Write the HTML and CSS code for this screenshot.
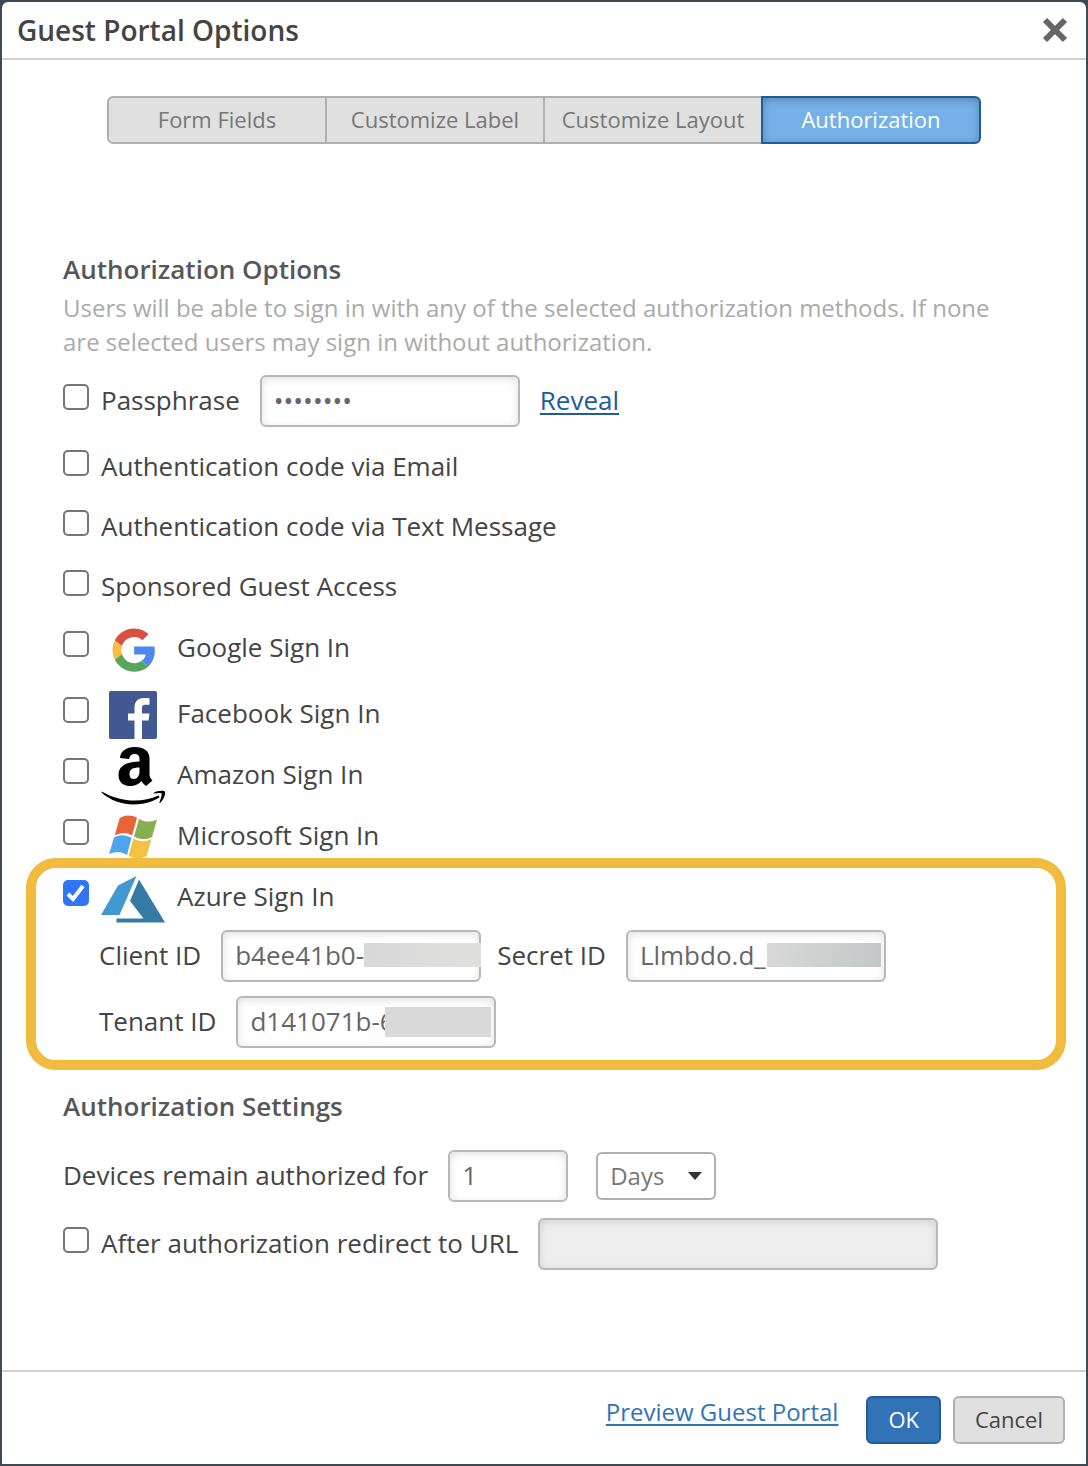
FILE: index.html
```html
<!DOCTYPE html>
<html lang="en">
<head>
    <meta charset="UTF-8">
    <title>Guest Portal Options</title>
    <link rel="stylesheet" href="styles.css">
</head>
<body>
    <div class="dialog">
        <header class="dialog-header">
            <h1>Guest Portal Options</h1>
            <button class="close" type="button" aria-label="Close">
                <svg width="26" height="26" viewBox="0 0 26 26"><path d="M3 3L23 23M23 3L3 23" stroke="#666" stroke-width="6"/></svg>
            </button>
        </header>

        <main class="dialog-body">
            <nav class="tabs">
                <button type="button">Form Fields</button>
                <button type="button">Customize Label</button>
                <button type="button">Customize Layout</button>
                <button type="button" class="active">Authorization</button>
            </nav>

            <section class="options">
                <h2>Authorization Options</h2>
                <p class="hint">Users will be able to sign in with any of the selected authorization methods. If none are selected users may sign in without authorization.</p>

                <div class="row passphrase">
                    <input type="checkbox" id="passphrase">
                    <label for="passphrase">Passphrase</label>
                    <input class="field" type="password" value="password" aria-label="Passphrase value">
                    <a href="#">Reveal</a>
                </div>
                <div class="row">
                    <input type="checkbox" id="email">
                    <label for="email">Authentication code via Email</label>
                </div>
                <div class="row">
                    <input type="checkbox" id="text">
                    <label for="text">Authentication code via Text Message</label>
                </div>
                <div class="row">
                    <input type="checkbox" id="sponsored">
                    <label for="sponsored">Sponsored Guest Access</label>
                </div>

                <div class="row social google">
                    <input type="checkbox" id="google">
                    <svg class="logo" viewBox="0 0 64 64">
                        <g transform="translate(11.5 12.500) scale(.9)">
                            <path fill="#d95040" d="M24 9.5c3.54 0 6.71 1.22 9.21 3.6l6.85-6.85C35.9 2.38 30.47 0 24 0 14.62 0 6.51 5.38 2.56 13.22l7.98 6.19C12.43 13.72 17.74 9.5 24 9.5z"/>
                            <path fill="#5186ec" d="M46.98 24.55c0-1.57-.15-3.09-.38-4.55H24v9.02h12.94c-.58 2.96-2.26 5.48-4.78 7.18l7.73 6c4.51-4.18 7.09-10.36 7.09-17.65z"/>
                            <path fill="#f2bd42" d="M10.53 28.59c-.48-1.45-.76-2.99-.76-4.59s.27-3.14.76-4.59l-7.98-6.19C.92 16.46 0 20.12 0 24s.92 7.54 2.56 10.78l7.97-6.19z"/>
                            <path fill="#58a55c" d="M24 48c6.48 0 11.93-2.13 15.89-5.81l-7.73-6c-2.15 1.45-4.92 2.3-8.16 2.3-6.26 0-11.57-4.22-13.47-9.91l-7.98 6.19C6.51 42.62 14.62 48 24 48z"/>
                        </g>
                    </svg>
                    <label for="google">Google Sign In</label>
                </div>
                <div class="row social">
                    <input type="checkbox" id="facebook">
                    <svg class="logo" viewBox="0 0 64 64">
                        <rect x="8" y="9" width="48" height="48" rx="2" fill="#415893"/>
                        <path fill="#fff" d="M33.5 57V38.500H27v-7h6.500v-6c0-6.500 4-9.500 9.500-9.500 2.600 0 5 .2 5.500.3v6.500h-3.800c-3 0-3.700 1.500-3.700 3.700v5h7.500l-1 7H41V57z"/>
                    </svg>
                    <label for="facebook">Facebook Sign In</label>
                </div>
                <div class="row social">
                    <input type="checkbox" id="amazon">
                    <svg class="logo" viewBox="0 0 64 64">
                        <path fill="#000" fill-rule="evenodd" d="M19 15C19.500 8 25 4 34 4s14.500 4 14.500 11.500V31c0 3 1 4.500 3 6.500L45 43c-2-1.500-3.500-3-4.500-5-3 3.500-6.500 5-11.500 5-7 0-11.500-4-11.500-11 0-9 7-13 21-13.500V16c0-3.500-1.500-5-5-5-3 0-4.500 1.500-5.500 5zM38.500 24.500c-7 0-10 2-10 6.500 0 3 1.500 5 4 5 4 0 6-3.500 6-8z"/>
                        <path fill="#000" d="M.5 48.500C19 59 40 60.500 57.500 52.500l1 2C42 64.500 17 64.500.500 49.500z"/>
                        <path fill="#000" d="M52.500 50c3-2.500 10-3 11.500-1.500 1 2-1.500 8.500-5 11.500l-.7-.6c1.500-3.400 3-8 2.200-9-1-.9-5-.5-8 .2z"/>
                    </svg>
                    <label for="amazon">Amazon Sign In</label>
                </div>
                <div class="row social">
                    <input type="checkbox" id="microsoft">
                    <svg class="logo" viewBox="0 0 64 64">
                        <path fill="#e96339" d="M18.500 14.500c5-3.700 11.500-3.800 17.500-.5L31 31.500c-5.500-3.500-11-3.200-17.300 0z"/>
                        <path fill="#87ae50" d="M38 15c6 3.200 11.500 3.500 18 .5l-5 17.500c-6 3.500-12 2.500-18-.5z"/>
                        <path fill="#4da5ed" d="M13 33.500c5.500-3 11-3.200 17.500.3L26 51c-6-3.500-11-4-18-.7z"/>
                        <path fill="#f4c143" d="M32.500 34.500c6 3.500 11.500 3.500 18 .5L45.500 52c-6 3.500-12 2.500-18-.5z"/>
                    </svg>
                    <label for="microsoft">Microsoft Sign In</label>
                </div>

                <div class="azure">
                    <div class="row social">
                        <input type="checkbox" id="azure" checked>
                        <svg class="logo" viewBox="0 0 64 64">
                            <path fill="#4298d0" d="M35.500 11L17 20.500 0 50h18.500z"/>
                            <path fill="#357ba6" d="M38 14.500L29 36l13.500 17.500H15.500V57.500H64z"/>
                        </svg>
                        <label for="azure">Azure Sign In</label>
                    </div>
                    <div class="row ids">
                        <label for="client">Client ID</label>
                        <span class="masked">
                            <input class="field" type="text" id="client" value="b4ee41b0-">
                            <span class="mask mask-client"></span>
                        </span>
                        <label for="secret">Secret ID</label>
                        <span class="masked">
                            <input class="field" type="text" id="secret" value="Llmbdo.d_">
                            <span class="mask mask-secret"></span>
                        </span>
                    </div>
                    <div class="row ids">
                        <label for="tenant">Tenant ID</label>
                        <span class="masked">
                            <input class="field" type="text" id="tenant" value="d141071b-6">
                            <span class="mask mask-tenant"></span>
                        </span>
                    </div>
                </div>
            </section>

            <section class="settings">
                <h2>Authorization Settings</h2>
                <div class="row devices">
                    <label for="duration">Devices remain authorized for</label>
                    <input class="field short" type="text" id="duration" value="1">
                    <span class="select">
                        <select aria-label="Unit">
                            <option>Days</option>
                            <option>Hours</option>
                        </select>
                        <svg width="14" height="8" viewBox="0 0 14 8"><path d="M0 0h14L7 8z" fill="#333"/></svg>
                    </span>
                </div>
                <div class="row redirect">
                    <input type="checkbox" id="redirect">
                    <label for="redirect">After authorization redirect to URL</label>
                    <input class="field long" type="text" aria-label="Redirect URL" disabled>
                </div>
            </section>
        </main>

        <footer class="dialog-footer">
            <a href="#">Preview Guest Portal</a>
            <button type="button" class="btn primary">OK</button>
            <button type="button" class="btn">Cancel</button>
        </footer>
    </div>
</body>
</html>
```

FILE: styles.css
```css
* {
    box-sizing: border-box;
}
body {
    margin: 0;
    padding: 2px;
    min-height: 100vh;
    display: flex;
    background: #3c4a56;
    color: #444;
    font-family: "Open Sans", "Noto Sans", sans-serif;
    font-size: 26px;
    line-height: 34px;
}
h1, h2, p {
    margin: 0;
}
h1, h2 {
    font-size: 26px;
    font-weight: 600;
}
h1 {
    color: #444;
    font-size: 28px;
}
h2 {
    color: #54585c;
}
a {
    color: #225b99;
    text-decoration-thickness: 2px;
    text-underline-offset: 3px;
}
button, input, select {
    font-family: inherit;
}
.dialog {
    flex: 1;
    display: flex;
    flex-direction: column;
    background: #fff;
    border-radius: 6px 6px 0 0;
}
.dialog-header {
    display: flex;
    justify-content: space-between;
    align-items: center;
    height: 58px;
    padding: 0 18px 0 15px;
    border-bottom: 2px solid #d0d0d0;
}
.close {
    display: flex;
    padding: 0;
    border: none;
    background: none;
}
.dialog-body {
    flex: 1;
    padding: 36px 61px 0;
}
.tabs {
    display: flex;
    margin: 0 44px;
}
.tabs button {
    flex: 1;
    height: 48px;
    margin-left: -2px;
    padding: 0 0 2px;
    border: 2px solid #b0b0b0;
    background: #e0e0e0;
    color: #777;
    font-size: 22px;
}
.tabs button:first-child {
    margin-left: 0;
    border-radius: 6px 0 0 6px;
}
.tabs button:last-child {
    border-radius: 0 6px 6px 0;
}
.tabs .active {
    border-color: #225b99;
    background: #75b1e8;
    box-shadow: inset 0 2px 8px rgba(0, 0, 0, 0.25);
    color: #fff;
}
.options {
    margin-top: 108px;
}
.hint {
    padding: 5px 0 12px;
    color: #aaa;
    font-size: 24px;
}
.row {
    display: flex;
    align-items: center;
    height: 60px;
}
.row label, .row a {
    padding-bottom: 2px;
}
.row input[type="checkbox"] {
    appearance: none;
    flex: none;
    width: 26px;
    height: 26px;
    margin: 0 12px 8px 0;
    border: 2px solid #767676;
    border-radius: 5px;
    background: #fff;
}
.row input[type="checkbox"]:checked {
    border-color: #2f76f6;
    background: #2f76f6 url("data:image/svg+xml,%3Csvg xmlns='http://www.w3.org/2000/svg' viewBox='0 0 22 22'%3E%3Cpath d='M3 12l5 5L18 4' fill='none' stroke='white' stroke-width='4'/%3E%3C/svg%3E") center / 22px no-repeat;
}
.passphrase {
    margin-bottom: 6px;
}
.field {
    width: 260px;
    height: 52px;
    padding: 0 12px 2px;
    border: 2px solid #b8b8b8;
    border-radius: 6px;
    background: #fff;
    box-shadow: inset 0 2px 8px rgba(0, 0, 0, 0.12);
    color: #666;
    font-size: 26px;
}
.row .field {
    margin-left: 20px;
}
.row .field + a {
    margin-left: 20px;
}
.row.social {
    height: 61px;
}
.google {
    margin-bottom: 5px;
}
.logo {
    flex: none;
    width: 64px;
    height: 64px;
    margin-right: 12px;
}
.azure {
    display: flow-root;
    position: relative;
}
/* highlight frame drawn around the Azure block */
.azure::after {
    content: "";
    position: absolute;
    inset: -8px -41px -8px -37px;
    border: 10px solid #f1bb40;
    border-radius: 30px;
    pointer-events: none;
}
.ids {
    height: 52px;
    margin: 3px 0 14px;
    padding-left: 36px;
}
.masked {
    display: flex;
    position: relative;
    margin-right: 16px;
}
.mask {
    position: absolute;
    top: 13px;
    height: 24px;
}
.mask-client {
    left: 163px;
    right: 0;
    background: linear-gradient(90deg, #d8d8d8, #e0e0df);
}
.mask-secret {
    left: 161px;
    right: 5px;
    background: linear-gradient(110deg, #d8d9d8, #c4c7c8);
}
.mask-tenant {
    top: 11px;
    left: 169px;
    right: 5px;
    height: 30px;
    background: #d9d9d9;
}
.settings {
    margin-top: 27px;
}
.devices {
    height: 68px;
    margin-top: 19px;
}
.redirect {
    height: 68px;
}
.row .short {
    width: 120px;
}
.row .long {
    width: 400px;
}
.field:disabled {
    background: #eee;
}
.select {
    display: flex;
    position: relative;
    margin-left: 28px;
}
.select select {
    appearance: none;
    width: 120px;
    height: 48px;
    padding: 0 12px 2px;
    border: 2px solid #b0b0b0;
    border-radius: 6px;
    background: #fff;
    color: #777;
    font-size: 24px;
}
.select svg {
    position: absolute;
    top: 20px;
    right: 14px;
    pointer-events: none;
}
.dialog-footer {
    display: flex;
    justify-content: flex-end;
    align-items: center;
    height: 94px;
    padding: 4px 21px 0;
    border-top: 2px solid #d0d0d0;
}
.dialog-footer a {
    margin: 0 28px 16px 0;
    color: #3273b8;
    font-size: 24px;
}
.btn {
    height: 48px;
    padding: 0 20px 2px;
    border: 2px solid #b0b0b0;
    border-radius: 6px;
    background: #e0e0e0;
    color: #444;
    font-size: 22px;
}
.primary {
    margin-right: 12px;
    border-color: #225b99;
    background: #3273b8;
    color: #fff;
}
```
